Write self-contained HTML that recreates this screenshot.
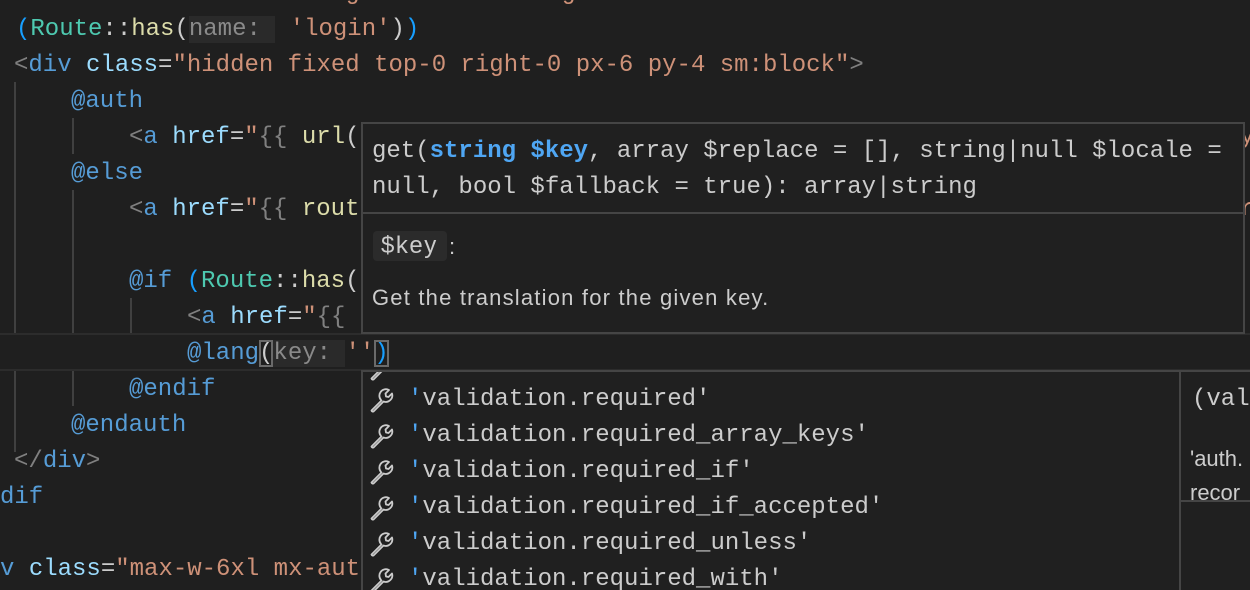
<!DOCTYPE html>
<html><head><meta charset="utf-8"><style>
html,body{margin:0;width:1250px;height:590px;overflow:hidden}
body{background:#1f1f1f;position:relative;font-family:"Liberation Mono",monospace;}
.l{position:absolute;left:0;height:36px;line-height:36px;font-size:24px;white-space:pre;color:#cccccc;}
.b{color:#808080}.t{color:#569cd6}.a{color:#9cdcfe}.s{color:#ce9178}.c{color:#4ec9b0}.f{color:#dcdcaa}.p{color:#179fff}.h{color:#8a8a8a;background:#2a2a2a}.w{color:#cccccc}
.g{position:absolute;width:2px;background:#404040}
.hover{position:absolute;left:361px;top:122px;width:880px;height:208px;background:#202020;border:2px solid #454545;}
.sug{position:absolute;left:361px;top:370px;width:817px;height:230px;background:#202020;border:2px solid #454545;overflow:hidden}
.row{position:absolute;left:0;height:36px;line-height:36px;font-size:24px;white-space:pre;color:#cccccc}
.det{position:absolute;left:1179px;top:370px;width:80px;height:230px;background:#202020;border:2px solid #454545;overflow:hidden}
.sans{font-family:"Liberation Sans",sans-serif}
</style></head><body>
<div class="l" style="top:-24px;left:14px;color:#ce9178">&lt;div class="h-16 w-16 bg-red-50 dark:bg-red-800/20 flex items-center</div>
<div class="l" style="top:12px;left:16px"><span class="p">(</span><span class="c">Route</span><span class="w">::</span><span class="f">has</span><span class="w">(</span><span class="h">name: </span> <span class="s">'login'</span><span class="w">)</span><span class="p">)</span></div>
<div class="l" style="top:48px;left:14px"><span class="b">&lt;</span><span class="t">div</span> <span class="a">class</span><span class="w">=</span><span class="s">"hidden fixed top-0 right-0 px-6 py-4 sm:block"</span><span class="b">&gt;</span></div>
<div class="g" style="left:14px;top:82px;height:370px"></div>
<div class="l" style="top:84px;left:71px"><span class="t">@auth</span></div>
<div class="g" style="left:72px;top:118px;height:36px"></div>
<div class="l" style="top:120px;left:129px"><span class="b">&lt;</span><span class="t">a</span> <span class="a">href</span><span class="w">=</span><span class="s">"</span><span class="b">{{</span> <span class="f">url</span><span class="w">(</span></div>
<div class="l" style="top:156px;left:71px"><span class="t">@else</span></div>
<div class="g" style="left:72px;top:190px;height:216px"></div>
<div class="l" style="top:192px;left:129px"><span class="b">&lt;</span><span class="t">a</span> <span class="a">href</span><span class="w">=</span><span class="s">"</span><span class="b">{{</span> <span class="f">rout</span></div>
<div class="l" style="top:264px;left:129px"><span class="t">@if</span> <span class="p">(</span><span class="c">Route</span><span class="w">::</span><span class="f">has</span><span class="w">(</span></div>
<div class="g" style="left:130px;top:298px;height:72px"></div>
<div style="position:absolute;left:0;top:333px;width:1250px;height:34px;border-top:2px solid #2c2c2c;border-bottom:2px solid #2c2c2c;background:#1f1f1f"></div>
<div class="l" style="top:300px;left:187px"><span class="b">&lt;</span><span class="t">a</span> <span class="a">href</span><span class="w">=</span><span class="s">"</span><span class="b">{{</span></div>
<div class="l" style="top:336px;left:187px"><span class="t">@lang</span><span style="outline:2px solid #6a6a6a;outline-offset:-2px;color:#ccc">(</span><span class="h">key: </span><span class="s">''</span><span style="outline:2px solid #6a6a6a;outline-offset:-2px" class="p">)</span></div>
<div class="l" style="top:372px;left:129px"><span class="t">@endif</span></div>
<div class="l" style="top:408px;left:71px"><span class="t">@endauth</span></div>
<div class="l" style="top:444px;left:14px"><span class="b">&lt;/</span><span class="t">div</span><span class="b">&gt;</span></div>
<div class="l" style="top:480px;left:0px"><span class="t">dif</span></div>
<div class="l" style="top:552px;left:0px"><span class="t">v</span> <span class="a">class</span><span class="w">=</span><span class="s">"max-w-6xl mx-aut</span></div>
<div class="l" style="top:120px;left:1240px"><span class="s">y</span></div>
<div class="l" style="top:192px;left:1240px"><span class="s">r</span></div>

<div class="hover">
<div class="row" style="left:9px;top:10px"><span>get(</span><span style="color:#4fa6f3;font-weight:bold">string $key</span>, array $replace = [], string|null $locale =</div>
<div class="row" style="left:9px;top:46px">null, bool $fallback = true): array|string</div>
<div style="position:absolute;left:0;top:88px;width:880px;height:2px;background:#454545"></div>
<div class="sans" style="position:absolute;left:10px;top:107px;height:30px;width:66px;background:#2b2b2b;border-radius:4px;font-size:24px;line-height:30px;color:#cccccc;padding-left:8px;letter-spacing:1.5px">$key</div>
<div class="sans" style="position:absolute;left:86px;top:108px;font-size:22px;line-height:30px;color:#ccc">:</div>
<div class="sans" style="position:absolute;left:9px;top:159px;font-size:22px;line-height:30px;color:#cccccc;letter-spacing:1.2px">Get the translation for the given key.</div>
</div>

<div class="sug">
<svg width="40" height="230" style="position:absolute;left:3px;top:0" viewBox="0 0 40 230">
<defs><path id="wr" d="M3.5 24.5 L13.5 14.5 A6.5 6.5 0 0 1 21 4 L17.5 7.5 L18 10.5 L20.5 11 L24 7.5 A6.5 6.5 0 0 1 15.5 15.5 L5.5 25.5 A1.4 1.4 0 0 1 3.5 24.5 Z" fill="none" stroke="#cccccc" stroke-width="1.8" stroke-linejoin="round"/></defs>
<g transform="translate(2,-18)"><use href="#wr"/></g>
<g transform="translate(2,14)"><use href="#wr"/></g>
<g transform="translate(2,50)"><use href="#wr"/></g>
<g transform="translate(2,86)"><use href="#wr"/></g>
<g transform="translate(2,122)"><use href="#wr"/></g>
<g transform="translate(2,158)"><use href="#wr"/></g>
<g transform="translate(2,194)"><use href="#wr"/></g>
</svg>
<div class="row" style="left:45px;top:10px"><span style="color:#4fa6f3">'</span>validation.required'</div>
<div class="row" style="left:45px;top:46px"><span style="color:#4fa6f3">'</span>validation.required_array_keys'</div>
<div class="row" style="left:45px;top:82px"><span style="color:#4fa6f3">'</span>validation.required_if'</div>
<div class="row" style="left:45px;top:118px"><span style="color:#4fa6f3">'</span>validation.required_if_accepted'</div>
<div class="row" style="left:45px;top:154px"><span style="color:#4fa6f3">'</span>validation.required_unless'</div>
<div class="row" style="left:45px;top:190px"><span style="color:#4fa6f3">'</span>validation.required_with'</div>
</div>
<div class="det">
<div class="row" style="left:11px;top:10px">(val</div>
<div class="sans" style="position:absolute;left:9px;top:70px;font-size:22px;line-height:34px;color:#ccc;white-space:pre">'auth.
recor</div>
<div style="position:absolute;left:0;top:128px;width:80px;height:2px;background:#454545"></div>
</div>
</body></html>
